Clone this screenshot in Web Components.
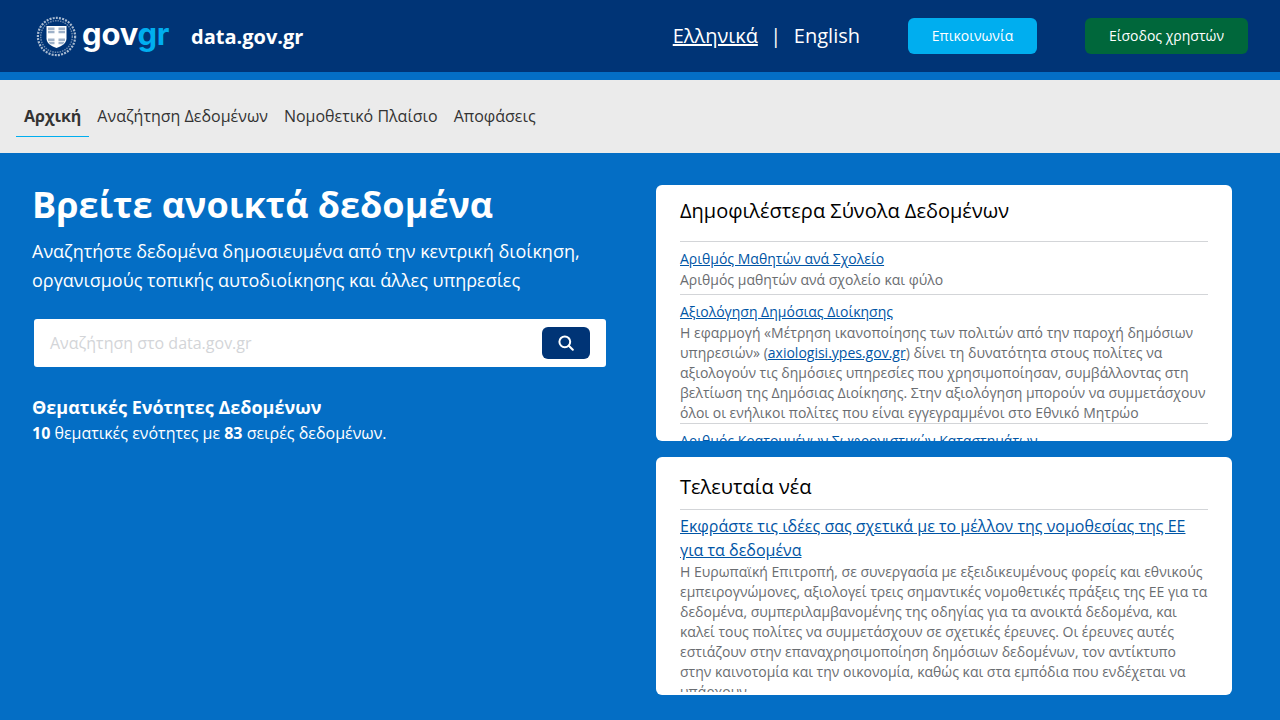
<!DOCTYPE html>
<html lang="el">
<head>
<meta charset="utf-8">
<title>data.gov.gr</title>
<style>
  html, body { margin: 0; height: 100%; }
  body {
    background: #046ec5;
    font-family: "Open Sans", "Noto Sans", sans-serif;
    overflow: hidden;
  }
  .page {
    display: grid;
    grid-template-columns: 1fr 1fr;
    gap: 48px;
    padding: 32px 48px 0 32px;
  }
  .right { display: flex; flex-direction: column; gap: 16px; }
</style>
</head>
<body>
<gov-header></gov-header>
<gov-nav></gov-nav>
<div class="page">
  <search-hero></search-hero>
  <div class="right">
    <info-card heading="Δημοφιλέστερα Σύνολα Δεδομένων" height="256" head-top="12" head-height="56">
      <card-item title-text="Αριθμός Μαθητών ανά Σχολείο">Αριθμός μαθητών ανά σχολείο και φύλο</card-item>
      <card-item clip title-text="Αξιολόγηση Δημόσιας Διοίκησης">Η εφαρμογή «Μέτρηση ικανοποίησης των πολιτών από την παροχή δημόσιων υπηρεσιών» (<a href="#" style="color:#0055a5">axiologisi.ypes.gov.gr</a>) δίνει τη δυνατότητα στους πολίτες να αξιολογούν τις δημόσιες υπηρεσίες που χρησιμοποίησαν, συμβάλλοντας στη βελτίωση της Δημόσιας Διοίκησης. Στην αξιολόγηση μπορούν να συμμετάσχουν όλοι οι ενήλικοι πολίτες που είναι εγγεγραμμένοι στο Εθνικό Μητρώο</card-item>
      <card-item title-text="Αριθμός Κρατουμένων Σωφρονιστικών Καταστημάτων"></card-item>
    </info-card>
    <info-card heading="Τελευταία νέα" height="238" head-top="16" head-height="52">
      <card-item big title-text="Εκφράστε τις ιδέες σας σχετικά με το μέλλον της νομοθεσίας της ΕΕ για τα δεδομένα">Η Ευρωπαϊκή Επιτροπή, σε συνεργασία με εξειδικευμένους φορείς και εθνικούς εμπειρογνώμονες, αξιολογεί τρεις σημαντικές νομοθετικές πράξεις της ΕΕ για τα δεδομένα, συμπεριλαμβανομένης της οδηγίας για τα ανοικτά δεδομένα, και καλεί τους πολίτες να συμμετάσχουν σε σχετικές έρευνες. Οι έρευνες αυτές εστιάζουν στην επαναχρησιμοποίηση δημόσιων δεδομένων, τον αντίκτυπο στην καινοτομία και την οικονομία, καθώς και στα εμπόδια που ενδέχεται να υπάρχουν.</card-item>
    </info-card>
  </div>
</div>

<script>
class GovHeader extends HTMLElement {
  constructor() {
    super();
    this.attachShadow({ mode: "open" });
    this.shadowRoot.innerHTML = `
      <style>
        :host { display: block; }
        .bar {
          height: 72px;
          background: #003476;
          border-bottom: 8px solid #046ec5;
          display: flex;
          align-items: center;
          padding: 0 32px 0 36px;
          color: #fff;
        }
        .logo { display: flex; align-items: center; gap: 5px; }
        .word {
          width: 87px;
          font: 700 31px/1 Inter, "Open Sans", sans-serif;
          letter-spacing: -0.2px;
          margin-top: -6px;
        }
        .word span { color: #00aeef; }
        .site { font-weight: 700; font-size: 20px; margin-left: 22px; }
        .right { margin-left: auto; display: flex; align-items: center; }
        .lang { font-size: 20px; display: flex; align-items: center; padding-bottom: 2px; }
        .lang a { color: #fff; text-decoration: none; }
        .lang a.on { text-decoration: underline; }
        .lang i { font-style: normal; margin: 0 12.5px; }
        .btn {
          height: 36px;
          display: flex;
          align-items: center;
          justify-content: center;
          border-radius: 6px;
          font-size: 14px;
          color: #fff;
          padding-bottom: 2px;
          box-sizing: border-box;
        }
        .contact { width: 129px; background: #00aeef; margin-left: 48px; }
        .login { width: 163px; background: #00673b; margin-left: 48px; }
      </style>
      <div class="bar">
        <div class="logo">
          <svg width="41" height="41" viewBox="0 0 41 41" fill="none">
            <circle cx="20.5" cy="20.5" r="18.6" stroke="#a9bbd1" stroke-width="2.2" stroke-dasharray="2 1.2"/>
            <circle cx="20.5" cy="20.5" r="15.8" stroke="#6f8cb0" stroke-width="1.4" stroke-dasharray="1.5 1"/>
            <path d="M10.500 10h20v12.500c0 5-5 7.500-10 9.500-5-2-10-4.500-10-9.500z" fill="#fff"/>
            <path d="M12 11.500h6.500v2.400H12zM12 14.800h6.500v2.400H12zM22.500 11.500H29v2.400h-6.500zM22.500 14.800H29v2.400h-6.500zM12 22.500h6.500v2.400H12zM12.500 25.800h6v2.400h-4.500zM22.500 22.500H29v2.400h-6.500zM22.500 25.800h6l-1.500 2.400h-4.500z" fill="#9fb2c9"/>
          </svg>
          <div class="word">gov<span>gr</span></div>
        </div>
        <div class="site">data.gov.gr</div>
        <div class="right">
          <div class="lang"><a class="on" href="#">Ελληνικά</a><i>|</i><a href="#">English</a></div>
          <div class="btn contact">Επικοινωνία</div>
          <div class="btn login">Είσοδος χρηστών</div>
        </div>
      </div>`;
  }
}

class GovNav extends HTMLElement {
  constructor() {
    super();
    this.attachShadow({ mode: "open" });
    this.shadowRoot.innerHTML = `
      <style>
        :host { display: block; }
        nav {
          height: 73px;
          box-sizing: border-box;
          background: #ebebeb;
          padding: 19px 16px 0;
          display: flex;
          align-items: flex-start;
          font-size: 16px;
          color: #333;
        }
        a {
          color: inherit;
          text-decoration: none;
          height: 38px;
          line-height: 35px;
          padding: 0 8px;
          box-sizing: border-box;
        }
        a.on { font-weight: 700; border-bottom: 1px solid #00aeef; }
      </style>
      <nav>
        <a class="on" href="#">Αρχική</a>
        <a href="#">Αναζήτηση Δεδομένων</a>
        <a href="#">Νομοθετικό Πλαίσιο</a>
        <a href="#">Αποφάσεις</a>
      </nav>`;
  }
}

class SearchHero extends HTMLElement {
  constructor() {
    super();
    this.attachShadow({ mode: "open" });
    this.shadowRoot.innerHTML = `
      <style>
        :host { display: block; color: #fff; }
        h1 { margin: 0; font-size: 36px; line-height: 40px; font-weight: 700; }
        p.lead { margin: 12px 0 0; font-size: 18px; line-height: 29px; }
        .search {
          margin: 24px 2px 0;
          height: 48px;
          background: #fff;
          border-radius: 3px;
          display: flex;
          align-items: center;
          padding: 0 16px;
          font-size: 16px;
          color: #d3d5d8;
        }
        .go {
          margin-left: auto;
          width: 48px;
          height: 32px;
          border-radius: 6px;
          background: #003476;
          display: flex;
          align-items: center;
          justify-content: center;
        }
        h2 { margin: 27px 0 0; font-size: 18px; line-height: 27px; font-weight: 700; }
        p.count { margin: 0; font-size: 16px; line-height: 24px; }
      </style>
      <h1>Βρείτε ανοικτά δεδομένα</h1>
      <p class="lead">Αναζητήστε δεδομένα δημοσιευμένα από την κεντρική διοίκηση, οργανισμούς τοπικής αυτοδιοίκησης και άλλες υπηρεσίες</p>
      <div class="search">
        <span>Αναζήτηση στο data.gov.gr</span>
        <div class="go">
          <svg width="16" height="16" viewBox="0 0 16 16" fill="none" stroke="#fff" stroke-width="2" stroke-linecap="round">
            <circle cx="6.800" cy="6.800" r="5.400"/><path d="M10.800 10.800l4 4"/>
          </svg>
        </div>
      </div>
      <h2>Θεματικές Ενότητες Δεδομένων</h2>
      <p class="count"><b>10</b> θεματικές ενότητες με <b>83</b> σειρές δεδομένων.</p>`;
  }
}

class InfoCard extends HTMLElement {
  constructor() {
    super();
    this.attachShadow({ mode: "open" });
    this.shadowRoot.innerHTML = `
      <style>
        :host {
          display: block;
          height: ${this.getAttribute("height")}px;
          background: #fff;
          border-radius: 6px;
          overflow: hidden;
          box-sizing: border-box;
          padding: 0 24px;
        }
        h3 {
          margin: 0;
          padding-top: ${this.getAttribute("head-top")}px;
          height: ${this.getAttribute("head-height")}px;
          box-sizing: border-box;
          font-size: 20px;
          line-height: 28px;
          font-weight: 400;
          color: #000;
        }
      </style>
      <h3>${this.getAttribute("heading")}</h3>
      <slot></slot>`;
  }
}

class CardItem extends HTMLElement {
  constructor() {
    super();
    this.attachShadow({ mode: "open" });
    const big = this.hasAttribute("big");
    const clip = this.hasAttribute("clip");
    this.shadowRoot.innerHTML = `
      <style>
        :host {
          display: block;
          border-top: 1px solid #d3d5d8;
          padding: ${big ? 4 : 7}px 0 ${clip || big ? 0 : 4}px;
          font-size: 14px;
          line-height: 20px;
          color: #6a6d71;
          ${big ? "height: 183px; box-sizing: border-box; overflow: hidden;" : ""}
        }
        a {
          display: block;
          color: #0055a5;
          font-size: ${big ? 16 : 14}px;
          line-height: ${big ? 24 : 20}px;
          margin-bottom: ${big ? 0 : 1}px;
        }
        .desc { display: block; ${clip ? "max-height: 100px; overflow: hidden;" : ""} }
      </style>
      <a href="#">${this.getAttribute("title-text")}</a>
      <div class="desc"><slot></slot></div>`;
  }
}

customElements.define("gov-header", GovHeader);
customElements.define("gov-nav", GovNav);
customElements.define("search-hero", SearchHero);
customElements.define("info-card", InfoCard);
customElements.define("card-item", CardItem);
</script>
</body>
</html>
